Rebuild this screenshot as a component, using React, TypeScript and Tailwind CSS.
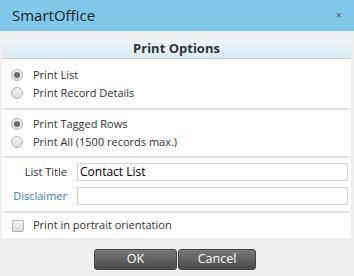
export default function App() {
  const font = { fontFamily: '"Open Sans", "Noto Sans", sans-serif' };

  const Radio = ({ checked, label }: { checked?: boolean; label: string }) => (
    <label className="flex h-[18px] items-center gap-[10px]">
      <span className="flex h-[12px] w-[12px] items-center justify-center rounded-full border border-[#b5b5b5] bg-gradient-to-b from-[#f4f4f4] to-[#dcdcdc]">
        {checked && <span className="h-[6px] w-[6px] rounded-full bg-[#6b6b6b]" />}
      </span>
      <span className="text-[11px] text-[#333]">{label}</span>
    </label>
  );

  const Divider = () => <div className="mx-[1px] h-[2px] bg-[#e3e3e3]" />;

  return (
    <div style={font} className="flex h-[276px] w-[354px] flex-col bg-[#efefef]">
      <div className="flex h-[31px] shrink-0 items-center justify-between bg-[#7fc8ea] pl-[12px] pr-[12px]">
        <span className="text-[15px] text-[#222]">SmartOffice</span>
        <span className="text-[11px] text-[#555]">×</span>
      </div>
      <div className="ml-[2px] mr-[3px] mt-[9px] flex flex-col bg-white">
        <div className="flex h-[19px] items-center justify-center border-b border-[#c6c6c6] bg-gradient-to-b from-[#f0f5f7] to-[#d9ebf3] text-[13px] font-bold text-[#333]">
          Print Options
        </div>
        <div className="flex flex-col px-[9px] pt-[7px] pb-[6px]">
          <Radio checked label="Print List" />
          <Radio label="Print Record Details" />
        </div>
        <Divider />
        <div className="flex flex-col px-[9px] pt-[5px] pb-[5px]">
          <Radio checked label="Print Tagged Rows" />
          <Radio label="Print All (1500 records max.)" />
        </div>
        <Divider />
        <div className="flex flex-col gap-[6px] pt-[5px] pb-[6px] pr-[3px]">
          <div className="flex items-center">
            <span className="w-[65px] text-right text-[11px] text-[#333]">List Title</span>
            <div className="ml-[10px] flex h-[18px] flex-1 items-center border border-[#d4d4d4] px-[2px] text-[12px] text-black">
              Contact List
            </div>
          </div>
          <div className="flex items-center">
            <span className="w-[65px] text-right text-[11px] text-[#2f7ed0]">Disclaimer</span>
            <div className="ml-[10px] h-[18px] flex-1 border border-[#d4d4d4]" />
          </div>
        </div>
        <Divider />
        <label className="flex h-[25px] items-center gap-[9px] px-[10px]">
          <span className="h-[12px] w-[12px] rounded-[2px] border border-[#b5b5b5] bg-gradient-to-b from-[#f4f4f4] to-[#dcdcdc]" />
          <span className="text-[11px] text-[#333]">Print in portrait orientation</span>
        </label>
      </div>
      <div className="mt-[11px] flex justify-center pr-[4px]">
        <button className="h-[21px] w-[83px] rounded-[3px] border border-[#444] bg-gradient-to-b from-[#7a7a7a] to-[#4a4a4a] text-[12.5px] text-white">
          OK
        </button>
        <button className="ml-[1px] h-[21px] w-[78px] rounded-[3px] border border-[#444] bg-gradient-to-b from-[#7a7a7a] to-[#4a4a4a] text-[12.5px] text-white">
          Cancel
        </button>
      </div>
    </div>
  );
}
